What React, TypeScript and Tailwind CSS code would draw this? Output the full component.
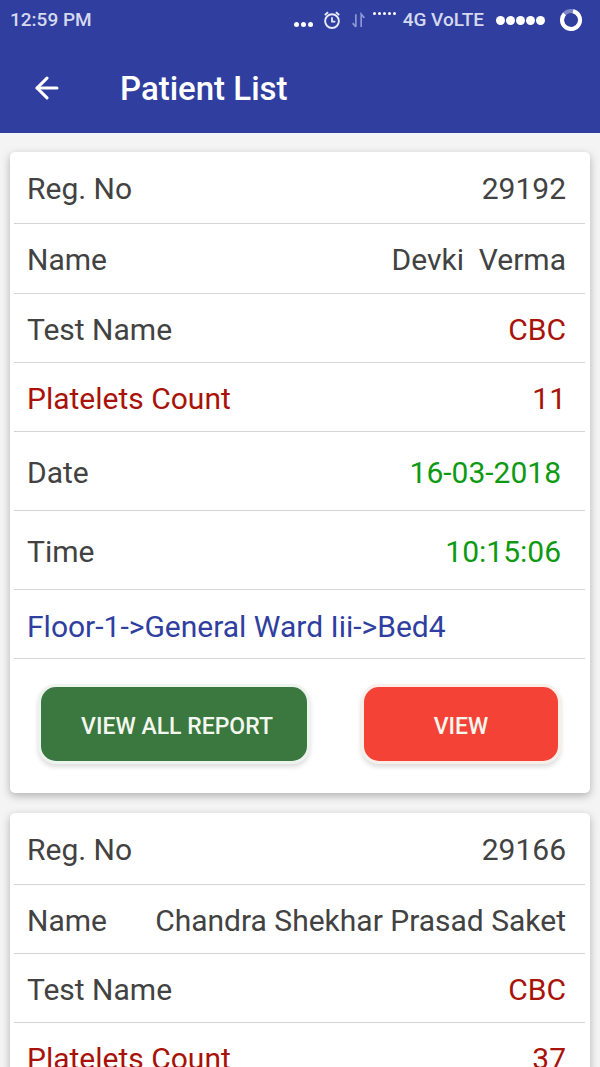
import { ArrowLeft } from "lucide-react";

type Row = { label: string; value: string; labelColor?: string; valueColor?: string; h: string; pr?: string };

const dark = "text-[#424242]";
const red = "text-[#a81208]";
const green = "text-[#0d9a12]";

const first: Row[] = [
  { label: "Reg. No", value: "29192", h: "h-[72px]" },
  { label: "Name", value: "Devki  Verma", h: "h-[70px]" },
  { label: "Test Name", value: "CBC", valueColor: red, h: "h-[69px]" },
  { label: "Platelets Count", value: "11", labelColor: red, valueColor: red, h: "h-[69px]" },
  { label: "Date", value: "16-03-2018", valueColor: green, h: "h-[79px]", pr: "pr-[24px]" },
  { label: "Time", value: "10:15:06", valueColor: green, h: "h-[79px]", pr: "pr-[24px]" },
];

const second: Row[] = [
  { label: "Reg. No", value: "29166", h: "h-[72px]" },
  { label: "Name", value: "Chandra Shekhar Prasad Saket", h: "h-[69px]" },
  { label: "Test Name", value: "CBC", valueColor: red, h: "h-[69px]" },
  { label: "Platelets Count", value: "37", labelColor: red, valueColor: red, h: "h-[69px]" },
];

function InfoRow({ row }: { row: Row }) {
  return (
    <div className={`flex items-center justify-between border-b border-[#d4d4d4] pl-[13px] pt-[2px] ${row.pr ?? "pr-[19px]"} ${row.h}`}>
      <span className={row.labelColor ?? dark}>{row.label}</span>
      <span className={`whitespace-pre ${row.valueColor ?? dark}`}>{row.value}</span>
    </div>
  );
}

function StatusBar() {
  return (
    <div className="flex h-[40px] items-center justify-between pl-[10px] pr-[17px] text-[#d5d9f0]">
      <span className="text-[19px] font-medium">12:59 PM</span>
      <div className="flex items-center text-[19px] font-medium">
        <span className="flex gap-[2px]">
          <i className="mt-[9px] h-[5px] w-[5px] rounded-full bg-white" />
          <i className="mt-[9px] h-[5px] w-[5px] rounded-full bg-white" />
          <i className="mt-[9px] h-[5px] w-[5px] rounded-full bg-white" />
        </span>
        <svg className="ml-[9px]" width="20" height="20" viewBox="0 0 18 18" fill="none" stroke="#e6e9f8">
          <circle cx="9" cy="10" r="6.200" strokeWidth="1.700" />
          <path d="M9 6.500V10.500H12M2.500 4.500L5.500 2M15.500 4.500L12.500 2" strokeWidth="1.600" />
        </svg>
        <svg className="ml-[9px]" width="15" height="17" viewBox="0 0 14 16" fill="none" stroke="#8d96d2" strokeWidth="1.600">
          <path d="M4.500 2V14M1.500 10.500L4.500 14M9.500 14V2L12.500 5.500" />
        </svg>
        <span className="mb-[13px] ml-[7px] flex gap-[2px]">
          <i className="h-[3px] w-[3px] rounded-full bg-white" />
          <i className="h-[3px] w-[3px] rounded-full bg-white" />
          <i className="h-[3px] w-[3px] rounded-full bg-white" />
          <i className="h-[3px] w-[3px] rounded-full bg-white" />
          <i className="h-[3px] w-[3px] rounded-full bg-white" />
        </span>
        <span className="ml-[7px]">4G VoLTE</span>
        <span className="ml-[12px] flex gap-[1px]">
          <i className="h-[9px] w-[9px] rounded-full bg-white" />
          <i className="h-[9px] w-[9px] rounded-full bg-white" />
          <i className="h-[9px] w-[9px] rounded-full bg-white" />
          <i className="h-[9px] w-[9px] rounded-full bg-white" />
          <i className="h-[9px] w-[9px] rounded-full bg-white" />
        </span>
        <svg className="ml-[14px]" width="24" height="24" viewBox="0 0 24 24" fill="none" strokeWidth="4">
          <circle cx="12" cy="12" r="9" stroke="#7d86c8" />
          <path d="M14 3.200A9 9 0 1 1 5.500 5.800" stroke="#ffffff" />
        </svg>
      </div>
    </div>
  );
}

export default function App() {
  return (
    <div className="h-[1067px] w-[600px] overflow-hidden bg-[#f4f4f4] font-['Roboto',sans-serif]">
      <div className="h-[133px] bg-[#303f9f]">
        <StatusBar />
        <div className="flex h-[93px] items-center pt-[3px] text-white">
          <ArrowLeft className="ml-[30px] h-[34px] w-[34px]" strokeWidth={2.2} />
          <h1 className="ml-[56px] text-[33px] font-medium leading-none">Patient List</h1>
        </div>
      </div>

      <div className="flex flex-col gap-[20px] px-[10px] pt-[19px] text-[30px]">
        <div className="rounded-[5px] bg-white pl-[4px] pr-[5px] shadow-[0_3px_8px_rgba(0,0,0,0.28)]">
          {first.map((row) => (
            <InfoRow key={row.label} row={row} />
          ))}
          <div className="flex h-[69px] items-center border-b border-[#d4d4d4] pl-[13px] pt-[4px] text-[#303f9f]">
            Floor-1-&gt;General Ward Iii-&gt;Bed4
          </div>
          <div className="flex h-[134px] items-start pl-[27px] pt-[28px] text-[23px] font-medium text-[#f4f7ee]">
            <button className="flex h-[74px] w-[266px] items-center justify-center rounded-[15px] bg-[#3a7840] pl-[6px] pt-[7px] shadow-[0_0_0_3px_#edf3ee,0_3px_5px_3px_rgba(0,0,0,0.14)]">
              VIEW ALL REPORT
            </button>
            <button className="ml-[57px] flex h-[74px] w-[194px] items-center justify-center rounded-[15px] bg-[#f44336] pt-[7px] shadow-[0_0_0_3px_#f8efe9,0_3px_5px_3px_rgba(0,0,0,0.14)]">
              VIEW
            </button>
          </div>
        </div>

        <div className="rounded-[5px] bg-white pl-[4px] pr-[5px] shadow-[0_3px_8px_rgba(0,0,0,0.28)]">
          {second.map((row) => (
            <InfoRow key={row.label} row={row} />
          ))}
        </div>
      </div>
    </div>
  );
}
